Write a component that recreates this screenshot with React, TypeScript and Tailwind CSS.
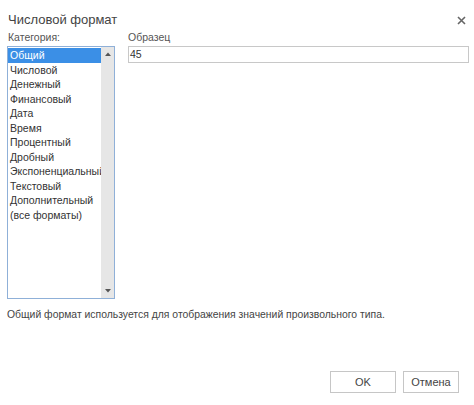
import React from 'react';

const categories = [
    'Общий',
    'Числовой',
    'Денежный',
    'Финансовый',
    'Дата',
    'Время',
    'Процентный',
    'Дробный',
    'Экспоненциальный',
    'Текстовый',
    'Дополнительный',
    '(все форматы)',
];

const App: React.FC = () => {
    return (
        <div
            className="w-[474px] h-[405px] bg-white flex flex-col text-[#333] overflow-hidden"
            style={{ fontFamily: '"Liberation Sans", Arial, sans-serif' }}
        >
            <div className="flex items-center justify-between pl-[8px] pr-[6px] pt-[9px] h-[31px]">
                <h1 className="text-[13px] leading-[22px] text-[#444]">Числовой формат</h1>
                <svg width="9" height="9" viewBox="0 0 9 9" className="mr-[2px]">
                    <path d="M1 1 L8 8 M8 1 L1 8" stroke="#666" strokeWidth="1.6" />
                </svg>
            </div>

            <div className="flex px-[7px] gap-[13px]">
                <div className="flex flex-col w-[108px]">
                    <span className="text-[10.5px] leading-[13px] pl-[1px] h-[15px] text-[#555]">Категория:</span>
                    <div className="flex h-[253px] border border-[#8fb0d8]">
                        <ul className="flex-1 flex flex-col pt-[1px] overflow-hidden">
                            {categories.map((c, i) => (
                                <li
                                    key={c}
                                    className={
                                        i === 0
                                            ? 'h-[14.5px] leading-[14.5px] text-[10.5px] pl-[2px] bg-[#3b8fe6] text-white whitespace-nowrap'
                                            : 'h-[14.5px] leading-[14.5px] text-[10.5px] pl-[2px] whitespace-nowrap'
                                    }
                                >
                                    {c}
                                </li>
                            ))}
                        </ul>
                        <div className="w-[13px] bg-[#e6e6e6] flex flex-col justify-between items-center py-[5px]">
                            <svg width="6" height="4" viewBox="0 0 6 4">
                                <path d="M0 4 L3 0.5 L6 4 Z" fill="#555" />
                            </svg>
                            <svg width="6" height="4" viewBox="0 0 6 4">
                                <path d="M0 0 L3 3.5 L6 0 Z" fill="#555" />
                            </svg>
                        </div>
                    </div>
                </div>

                <div className="flex flex-col flex-1 mr-[-2px]">
                    <span className="text-[10.5px] leading-[13px] h-[15px] text-[#555]">Образец</span>
                    <div className="h-[17px] border border-[#c8c8c8] px-[1px] text-[10.5px] leading-[15px]">45</div>
                </div>
            </div>

            <p className="px-[7px] mt-[9px] text-[10.4px] leading-[14px] text-[#444]">
                Общий формат используется для отображения значений произвольного типа.
            </p>

            <div className="flex justify-end gap-[7px] mt-[49px] pr-[15px]">
                <button className="w-[66px] h-[22px] border border-[#c6c6c6] text-[11px] text-[#444] bg-white">
                    OK
                </button>
                <button className="w-[56px] h-[22px] border border-[#c6c6c6] text-[11px] text-[#444] bg-white">
                    Отмена
                </button>
            </div>
        </div>
    );
};

export default App;
